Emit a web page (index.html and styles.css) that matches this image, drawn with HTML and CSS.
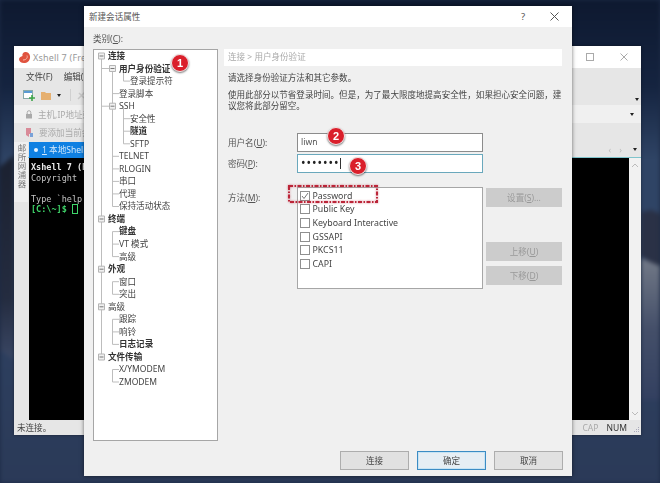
FILE: index.html
```html
<!DOCTYPE html>
<html lang="zh-CN">
<head>
<meta charset="utf-8">
<title>新建会话属性</title>
<link rel="stylesheet" href="styles.css">
</head>
<body>
<div class="desktop">
  <svg class="wallpaper" width="660" height="483" viewBox="0 0 660 483">
    <defs>
      <linearGradient id="sky" x1="0" y1="0" x2="0" y2="1">
        <stop offset="0" stop-color="#0e1930"/>
        <stop offset=".18" stop-color="#152440"/>
        <stop offset=".33" stop-color="#2f4465"/>
        <stop offset=".45" stop-color="#2f4465"/>
        <stop offset="1" stop-color="#2b3a58"/>
      </linearGradient>
      <linearGradient id="dark" x1="0" y1="0" x2="0" y2="1">
        <stop offset="0" stop-color="#1b2130"/>
        <stop offset=".7" stop-color="#242c40"/>
        <stop offset="1" stop-color="#3a4764"/>
      </linearGradient>
      <linearGradient id="light" x1="0" y1="0" x2="0" y2="1">
        <stop offset="0" stop-color="#727987"/>
        <stop offset=".5" stop-color="#444f69"/>
        <stop offset="1" stop-color="#334060"/>
      </linearGradient>
    </defs>
    <rect width="660" height="483" fill="url(#sky)"/>
    <path d="M0 167L14 155V360L0 350z" fill="url(#dark)"/>
    <path d="M641 212L652 210L660 214V268L641 256z" fill="#2a3146"/>
    <path d="M641 258L660 266V400H641z" fill="url(#light)"/>
  </svg>

  <section class="xshell">
    <header class="x-title">
      <svg class="x-logo" width="13" height="13" viewBox="0 0 13 13"><path d="M1 8c0 3 3 4.500 6 4 3.500-.5 5.500-3.500 5-7C11.500 2 9 .5 7 1 5 1.500 4 3 4.500 5 3 5.500 1.500 6 1 8z" fill="#e0533f"/><path d="M5 9c3 0 5-2 4-4.500" fill="none" stroke="#f6b5a5" stroke-width="1"/></svg>
      <span class="x-name">Xshell 7 (Free for Home/School)</span>
      <span class="x-controls">
        <svg width="8" height="8" viewBox="0 0 8 8"><rect x=".5" y=".5" width="7" height="7" fill="none" stroke="#aaa"/></svg>
        <svg width="8" height="8" viewBox="0 0 8 8"><path d="M.5.500l7 7M7.500.500l-7 7" stroke="#aaa"/></svg>
      </span>
    </header>
    <div class="x-bar x-menu"><span>文件(F)</span><span>编辑(E)</span></div>
    <div class="x-bar x-tools">
      <svg width="12" height="12" viewBox="0 0 12 12"><rect x=".5" y="1.500" width="9" height="8" fill="#fff" stroke="#8aa"/><rect x="1" y="2" width="8" height="2" fill="#5b9bd5"/><path d="M9 6v6M6 9h6" stroke="#3fa64a" stroke-width="1.600"/></svg>
      <svg class="folder" width="12" height="11" viewBox="0 0 12 11"><path d="M1 2h4l1 1h5v7H1z" fill="#e6b070"/></svg>
      <i class="arrow"></i>
      <i class="sep"></i>
      <svg width="11" height="11" viewBox="0 0 11 11"><path d="M2 9l7-7M3 3l5 5" stroke="#c9c9c9" stroke-width="1.500"/></svg>
      <i class="arrow end low"></i>
    </div>
    <div class="x-bar x-address">
      <svg width="8" height="9" viewBox="0 0 8 9"><rect x="1" y="4" width="6" height="4.500" fill="#aaa"/><path d="M2.200 4V2.500a1.800 1.800 0 0 1 3.600 0V4" fill="none" stroke="#aaa"/></svg>
      <span>主机,IP地址或会话名称</span><i class="arrow end near"></i>
    </div>
    <div class="x-bar x-links">
      <svg width="9" height="10" viewBox="0 0 9 10"><path d="M1 0h5v6H4v3L1 7z" fill="#d98a98"/><path d="M5 5h3v4H5z" fill="#7aa2d8"/></svg>
      <span>要添加当前会话，点击左侧的箭头按钮。</span>
    </div>
    <div class="x-tabs">
      <div class="x-tab"><i class="dot"></i><span><u>1</u> 本地Shell</span></div>
      <span class="nav">‹ ›</span><i class="arrow"></i>
    </div>
    <div class="x-main">
      <aside class="x-side"><div class="x-side-text">邮所网浦器</div></aside>
      <pre class="x-term"><b>Xshell 7 (Build 0056)</b>
Copyright (c) 2020 NetSarang Computer, Inc. All rights reserved.

Type `help' to learn how to use Xshell prompt.
<b class="green">[C:\~]$ </b><i class="cursor"></i></pre>
      <div class="x-scroll">
        <svg width="8" height="5" viewBox="0 0 8 5"><path d="M1 4l3-3 3 3" fill="none" stroke="#bbb"/></svg>
        <svg width="8" height="5" viewBox="0 0 8 5"><path d="M1 1l3 3 3-3" fill="none" stroke="#bbb"/></svg>
      </div>
    </div>
    <footer class="x-status"><span>未连接。</span><span class="caps"><em>CAP</em><span>NUM</span></span><svg class="grip" width="6" height="6" viewBox="0 0 6 6"><path d="M4 0h1v1H4zM2 2h1v1H2zM4 2h1v1H4zM0 4h1v1H0zM2 4h1v1H2zM4 4h1v1H4z" fill="#aab"/></svg></footer>
  </section>

  <section class="dialog">
    <header class="d-title">
      <span>新建会话属性</span>
      <span class="d-controls">
        <span class="help">?</span>
        <svg width="9" height="9" viewBox="0 0 9 9"><path d="M.5.500l8 8M8.500.500l-8 8" stroke="#555"/></svg>
      </span>
    </header>
    <div class="d-body">
      <div class="d-left">
        <div class="d-cat">类别(<u>C</u>):</div>
        <div class="tree">
          <svg class="tree-lines" width="123" height="345" viewBox="0 0 123 345">
            <path class="ln" d="M7.500 6V307M18.500 18.500V156.500M18.500 181.600V206.600M18.500 231.700V244.300M18.500 269.300V294.400M18.500 319.500V332M29.500 18.500V31.100M29.500 56.200V93.800M18.500 43.600H25M18.500 106.300H25M18.500 118.900H25M18.500 131.400H25M18.500 143.900H25M18.500 156.500H25M18.500 181.600H25M18.500 194.100H25M18.500 206.600H25M18.500 231.700H25M18.500 244.300H25M18.500 269.300H25M18.500 281.900H25M18.500 294.400H25M18.500 319.500H25M18.500 332H25M29.500 31.100H36M29.500 68.700H36M29.500 81.200H36M29.500 93.800H36M7.500 18.500H18M7.500 56.200H18"/>
            <g class="boxes">
              <path d="M4.500 3h6v6h-6zM15.500 15.500h6v6h-6zM15.500 53.200h6v6h-6zM4.500 166h6v6h-6zM4.500 216.200h6v6h-6zM4.500 253.800h6v6h-6zM4.500 304h6v6h-6z"/>
              <path class="minus" d="M5.500 6h4M16.500 18.500h4M16.500 56.200h4M5.500 169h4M5.500 219.200h4M5.500 256.800h4M5.500 307h4"/>
            </g>
          </svg>
          <ul class="tree-list">
            <li class="l0 b">连接</li>
            <li class="l1 b">用户身份验证</li>
            <li class="l2">登录提示符</li>
            <li class="l1">登录脚本</li>
            <li class="l1">SSH</li>
            <li class="l2">安全性</li>
            <li class="l2 b">隧道</li>
            <li class="l2">SFTP</li>
            <li class="l1">TELNET</li>
            <li class="l1">RLOGIN</li>
            <li class="l1">串口</li>
            <li class="l1">代理</li>
            <li class="l1">保持活动状态</li>
            <li class="l0 b">终端</li>
            <li class="l1 b">键盘</li>
            <li class="l1">VT 模式</li>
            <li class="l1">高级</li>
            <li class="l0 b">外观</li>
            <li class="l1">窗口</li>
            <li class="l1">突出</li>
            <li class="l0">高级</li>
            <li class="l1">跟踪</li>
            <li class="l1">响铃</li>
            <li class="l1 b">日志记录</li>
            <li class="l0 b">文件传输</li>
            <li class="l1">X/YMODEM</li>
            <li class="l1">ZMODEM</li>
          </ul>
        </div>
      </div>
      <div class="d-right">
        <div class="crumb">连接 &gt; 用户身份验证</div>
        <p class="p1">请选择身份验证方法和其它参数。</p>
        <p class="p2">使用此部分以节省登录时间。但是，为了最大限度地提高安全性，如果担心安全问题，建议您将此部分留空。</p>
        <div class="field first"><label>用户名(<u>U</u>):</label><div class="input">liwn</div></div>
        <div class="field"><label>密码(<u>P</u>):</label><div class="input focus"><span class="dots">•••••••</span><i class="caret"></i></div></div>
        <div class="method">
          <label>方法(<u>M</u>):</label>
          <ul class="checks">
            <li><i class="box on"><svg width="8" height="8" viewBox="0 0 8 8"><path d="M1 4l2 2.500L7 1" fill="none" stroke="#777"/></svg></i>Password</li>
            <li><i class="box"></i>Public Key</li>
            <li><i class="box"></i>Keyboard Interactive</li>
            <li><i class="box"></i>GSSAPI</li>
            <li><i class="box"></i>PKCS11</li>
            <li><i class="box"></i>CAPI</li>
          </ul>
          <div class="side-btns">
            <button class="btn off">设置(<u>S</u>)...</button>
            <button class="btn off up">上移(<u>U</u>)</button>
            <button class="btn off">下移(<u>D</u>)</button>
          </div>
        </div>
      </div>
    </div>
    <footer class="d-foot">
      <button class="btn">连接</button>
      <button class="btn primary">确定</button>
      <button class="btn">取消</button>
    </footer>
    <svg class="mark" width="90" height="18" viewBox="0 0 90 18"><rect x="1" y="1" width="88" height="16" fill="none" stroke="#bb2538" stroke-width="2" stroke-dasharray="4 1.500 1.500 1.500"/></svg>
    <span class="badge b1">1</span>
    <span class="badge b2">2</span>
    <span class="badge b3">3</span>
  </section>
</div>
</body>
</html>
```

FILE: styles.css
```css
* { box-sizing: border-box; }
html, body { margin: 0; padding: 0; }
body { width: 660px; height: 483px; overflow: hidden; background: #1c2a45; }
ul { list-style: none; margin: 0; padding: 0; }
p { margin: 0; }
i, em { font-style: normal; }

.desktop {
  position: relative;
  width: 660px;
  height: 483px;
  overflow: hidden;
  font-family: "Noto Sans", "Noto Sans CJK SC", sans-serif;
  font-size: 8.55px;
  color: #333;
  filter: blur(0.35px);
}
.wallpaper { position: absolute; left: 0; top: 0; display: block; filter: blur(2px); }

/* Xshell back window */
.xshell {
  position: absolute;
  left: 14px;
  top: 46px;
  width: 627px;
  height: 389px;
  display: flex;
  flex-direction: column;
  background: #e6e6e6;
  box-shadow: 0 0 3px rgba(0,0,0,.4);
  color: #666;
}
.x-title {
  height: 22px;
  flex: none;
  background: #fff;
  display: flex;
  align-items: center;
  padding: 0 13px 0 4px;
  color: #999;
  font-size: 9px;
}
.x-logo { flex: none; margin-right: 2px; }
.x-name { flex: 1; letter-spacing: .2px; }
.x-controls { display: flex; gap: 26px; }
.x-bar { display: flex; align-items: center; flex: none; padding-left: 11px; }
.x-menu { height: 17px; gap: 11px; color: #444; padding-left: 12px; }
.x-tools { height: 20px; gap: 5px; padding-left: 9px; padding-right: 2px; }
.x-address { height: 18px; background: #f0f0f0; gap: 5px; color: #aaa; padding-left: 11px; padding-right: 7px; }
.x-links { height: 19px; gap: 5px; color: #aaa; padding-left: 11px; }
.arrow { width: 0; height: 0; border: 2.5px solid transparent; border-top: 3px solid #222; border-bottom: 0; flex: none; }
.arrow.end { margin-left: auto; }
.arrow.low { align-self: flex-end; margin-bottom: 4px; }
.sep { width: 1px; height: 12px; background: #d0d0d0; margin-left: 4px; }
.x-tabs { height: 16px; flex: none; display: flex; align-items: center; padding: 0 4px 0 15px; border-bottom: 1px solid #7fc4cc; }
.x-tab { width: 55px; height: 16px; background: #0f80e2; color: #cfe6fa; display: flex; align-items: center; gap: 4px; padding-left: 5px; white-space: nowrap; overflow: hidden; }
.dot { width: 4px; height: 4px; border-radius: 50%; background: #e8f4ff; flex: none; }
.nav { margin-left: auto; margin-right: 8px; color: #bbb; letter-spacing: 3px; }
.x-main { flex: 1; display: flex; min-height: 0; }
.x-side { width: 15px; flex: none; background: #e6e6e6; }
.x-side-text { height: 60px; margin-top: -16px; background: #f0f0f0; writing-mode: vertical-rl; line-height: 14px; letter-spacing: .5px; font-size: 8.5px; color: #777; padding-top: 2px; }
.x-term {
  flex: 1;
  margin: 0;
  padding: 4px 2px;
  background: #000;
  color: #c4c4c4;
  font-family: "DejaVu Sans Mono", monospace;
  font-size: 8.5px;
  line-height: 10.6px;
  overflow: hidden;
  white-space: pre;
}
.x-term b { color: #e8e8e8; }
.x-term .green { color: #3fd66a; }
.cursor { display: inline-block; width: 6px; height: 10px; border: 1px solid #3fd66a; vertical-align: -2px; }
.x-scroll { width: 12px; flex: none; background: #f1f1f1; display: flex; flex-direction: column; align-items: center; justify-content: space-between; padding: 5px 0 4px; }
.x-status { height: 15px; flex: none; display: flex; align-items: center; padding: 0 1px 0 3px; color: #444; }
.caps { display: flex; gap: 8px; color: #333; margin-left: auto; margin-right: 7px; }
.caps em { color: #aaa; }
.grip { align-self: flex-end; margin-bottom: 2px; }

/* Dialog */
.dialog {
  position: absolute;
  left: 84px;
  top: 6px;
  width: 488px;
  height: 470px;
  display: flex;
  flex-direction: column;
  background: #f0f0f0;
  box-shadow: 0 0 4px rgba(0,0,0,.55);
  color: #444;
}
.d-title {
  height: 21px;
  flex: none;
  background: #fff;
  display: flex;
  align-items: center;
  justify-content: space-between;
  padding: 0 13px 0 5px;
  color: #555;
}
.d-controls { display: flex; align-items: center; gap: 25px; }
.help { font-size: 9.5px; color: #555; }
.d-body { flex: 1; display: flex; padding-left: 9px; min-height: 0; gap: 6px; }
.d-left { width: 125px; flex: none; display: flex; flex-direction: column; }
.d-cat { height: 22px; flex: none; line-height: 24px; color: #555; }
.tree { flex: 1; position: relative; background: #fff; border: 1px solid #a6a6a6; }
.tree-lines { position: absolute; left: 0; top: 0; }
.ln { fill: none; stroke: #bdbdbd; stroke-width: 1; }
.boxes path { fill: #f0f0f0; stroke: #b5b5b5; stroke-width: 1; }
.boxes .minus { fill: none; stroke: #777; }
.tree-list { position: relative; }
.tree-list li { height: 12.54px; line-height: 12.54px; white-space: nowrap; color: #444; }
.tree-list .b { font-weight: 700; color: #333; }
.l0 { padding-left: 14px; }
.l1 { padding-left: 25px; }
.l2 { padding-left: 36px; }

.d-right { width: 338px; flex: none; padding-top: 22px; }
.crumb { height: 17px; line-height: 17px; background: #fff; padding-left: 4px; color: #aaa; }
.p1 { margin-top: 6px; padding-left: 4px; line-height: 12px; }
.p2 { margin-top: 5.5px; padding-left: 4px; line-height: 11.5px; }
.field { display: flex; align-items: center; margin-top: 2px; padding-left: 4px; }
.field.first { margin-top: 20px; }
.field label { width: 69px; flex: none; color: #555; }
.input { width: 186px; height: 19px; background: #fff; border: 1px solid #8c8c8c; padding-left: 3px; line-height: 16px; display: flex; align-items: center; color: #555; }
.input.focus { border-color: #6aa8bc; }
.dots { color: #222; font-size: 12px; line-height: 12px; letter-spacing: 1px; }
.caret { width: 1px; height: 11px; background: #333; }
.method { display: flex; margin-top: 14px; padding-left: 4px; }
.method label { width: 69px; flex: none; padding-top: 4px; color: #555; }
.checks { width: 186px; height: 102px; flex: none; background: #fff; border: 1px solid #a6a6a6; padding: 1.5px 0 0 2px; }
.checks li { height: 13.65px; display: flex; align-items: center; gap: 2.5px; color: #444; font-size: 8.8px; white-space: nowrap; }
.box { width: 10px; height: 10px; background: #fff; border: 1px solid #8f8f8f; flex: none; display: flex; align-items: center; justify-content: center; }
.box svg { display: block; }
.side-btns { width: 76px; margin-left: 3px; padding-top: 1px; display: flex; flex-direction: column; gap: 5px; }
.btn { width: 69px; height: 19px; padding: 0; background: #e1e1e1; border: 1px solid #adadad; font: inherit; color: #444; display: block; }
.btn.off { width: 76px; background: #cccccc; border-color: #cccccc; color: #999; }
.btn.up { margin-top: 30px; }
.btn.primary { border: 1px solid #3c8cc4; box-shadow: inset 0 0 0 1px #c8e4f4; background: #e6eef4; }
.d-foot { height: 35px; flex: none; padding: 10px 9px 0 0; display: flex; justify-content: flex-end; gap: 8px; }

/* Annotations over the dialog */
.mark { position: absolute; left: 204px; top: 179px; filter: drop-shadow(0 0 1px rgba(187,37,56,.6)); }
.badge {
  position: absolute;
  width: 18px;
  height: 18px;
  border-radius: 50%;
  background: #da1f2b;
  border: 1px solid #f3e8e8;
  box-shadow: 0 1px 2px rgba(0,0,0,.55);
  color: #fff;
  font: 700 11px/16px "Liberation Sans", sans-serif;
  text-align: center;
}
.b1 { left: 87px; top: 48px; }
.b2 { left: 243px; top: 121px; }
.b3 { left: 265px; top: 151px; }
```
